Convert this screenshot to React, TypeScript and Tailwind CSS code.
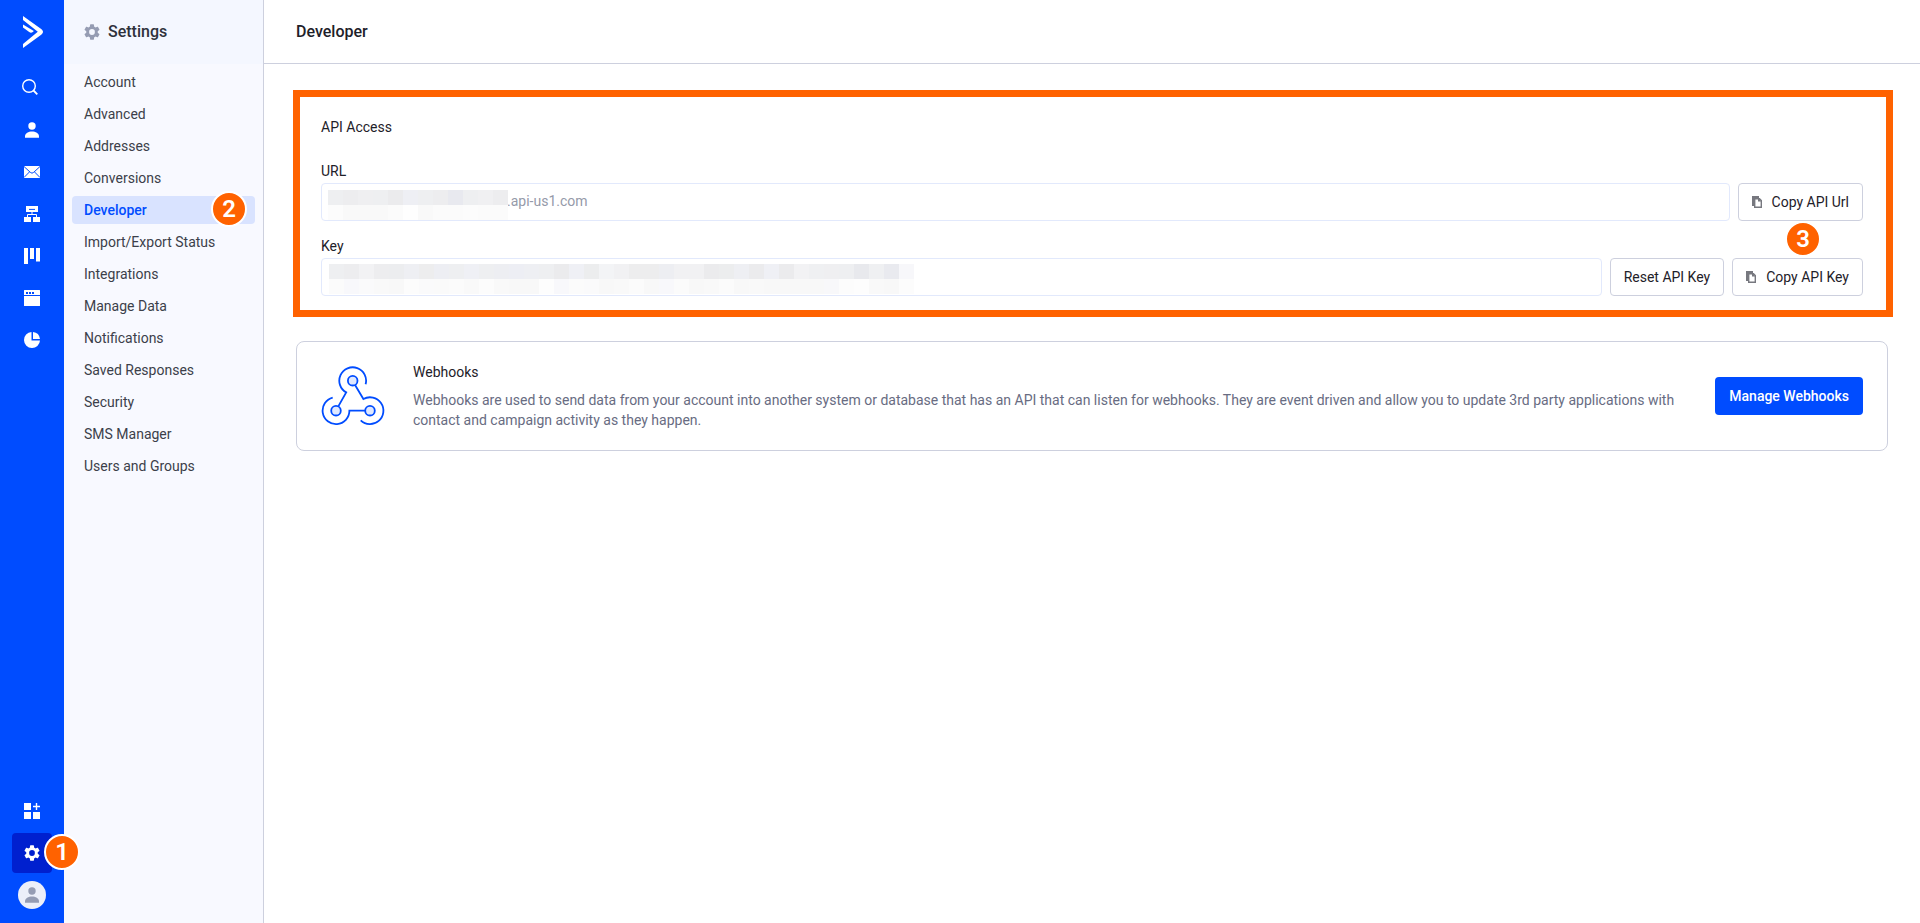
import { ReactNode } from "react";

const menuItems = [
  "Account",
  "Advanced",
  "Addresses",
  "Conversions",
  "Developer",
  "Import/Export Status",
  "Integrations",
  "Manage Data",
  "Notifications",
  "Saved Responses",
  "Security",
  "SMS Manager",
  "Users and Groups",
];

// shades of the tiles that hide the account name and the key
const urlTop = "eeeff1 ededef efeff1 eeeff1 ebebed eeeff4 eeeff1 ededef e8e9ef eeeff1 f0f0f2 ededef".split(" ");
const urlBottom = "fcfcfc f9f9f9 f9f9f9 f9f9f9 fbfbfb fefefe f9f9f9 fbfbfb fbfbfb fcfcfc fbfbfb fbfbfb".split(" ");
const keyTop = "eeeff1 ededef f2f2f4 ededef ecedef eeeff3 ededee edeef3 eeeff1 eff0f5 eeeff1 edeef2 edeef4 eeeff3 eeeff1 ebebed eff0f5 ecedee f3f4f6 f1f1f3 ededee ededee edeef2 f1f1f3 f1f1f3 ebebed ecedee eeeff3 ebebed eff0f5 ebebed f2f2f4 eff0f2 efeff1 eeeff1 e8e9ed eff0f2 e9eaef f7f7fa".split(" ");
const keyBottom = "fbfbfb f8f8fb fafafb f9f9f9 f8f8f8 fcfcfc fafafb fafafa fbfbfb f9f9f9 fcfcfc f9f9f9 f8f8f8 f8f8f8 fdfdfd f8f8fb fbfbfb fafafb f8f8f8 f9f9f9 fbfbfb f8f8f8 f8f8fb fbfbfb f8f8f8 f9f9f9 fbfbfb f8f8f8 f9f9f9 f8f8f8 f8f8f8 f8f8f8 f8f8f8 f8f8fa fcfcfc fdfdfd f9f9f9 f8f8f8 fcfcfc".split(" ");

function Gear(props: { className: string }) {
  return (
    <svg viewBox="2 2 20 20" className={props.className} fill="currentColor">
      <path d="M19.14 12.94c.04-.3.06-.61.06-.94 0-.32-.02-.64-.07-.94l2.03-1.58a.49.49 0 0 0 .12-.61l-1.92-3.32a.49.49 0 0 0-.59-.22l-2.39.96c-.5-.38-1.03-.7-1.62-.94l-.36-2.54a.48.48 0 0 0-.48-.41h-3.84a.47.47 0 0 0-.47.41l-.36 2.54c-.59.24-1.13.57-1.62.94l-2.39-.96a.48.48 0 0 0-.59.22L2.74 8.87a.48.48 0 0 0 .12.61l2.03 1.58c-.05.3-.09.63-.09.94s.02.64.07.94l-2.03 1.58a.49.49 0 0 0-.12.61l1.92 3.32c.12.22.37.29.59.22l2.39-.96c.5.38 1.03.7 1.62.94l.36 2.54c.05.24.24.41.48.41h3.84c.24 0 .44-.17.47-.41l.36-2.54c.59-.24 1.13-.56 1.62-.94l2.39.96c.22.08.47 0 .59-.22l1.92-3.32a.48.48 0 0 0-.12-.61zM12 15.6a3.6 3.6 0 1 1 0-7.2 3.6 3.6 0 0 1 0 7.2" />
    </svg>
  );
}

function PersonIcon() {
  return (
    <svg viewBox="0 0 16 16" className="size-4" fill="currentColor">
      <circle cx="8" cy="4" r="3.7" />
      <path d="M1 15.7v-1.5C1 11 4.5 9.4 8 9.4s7 1.6 7 4.8v1.5z" />
    </svg>
  );
}

function CopyIcon() {
  return (
    <svg viewBox="0 0 10 12" className="h-3 w-[10px] text-[#77787f]" fill="none" stroke="currentColor">
      <path d="M1 10V1h6" strokeWidth="2" />
      <path d="M2.7 2.7h4.8l1.8 1.8v6.8H2.7z" strokeWidth="1.4" />
      <path d="M6 2.7v2.8h3.3L7.5 2.7z" fill="currentColor" stroke="none" />
    </svg>
  );
}

function WebhookIcon() {
  return (
    <svg viewBox="0 0 64 60" className="h-[60px] w-16 shrink-0" fill="none" stroke="#004cff" strokeWidth="1.8">
      <path d="M44.6 18.3A13.4 13.4 0 1 0 25.2 26.4L17.3 40.4" />
      <path d="M34.2 19.2L42.4 33A13.4 13.4 0 1 1 39.7 54.3" />
      <path d="M44 44.7H28.4A13.4 13.4 0 1 1 11.7 31.7" />
      <circle cx="31.7" cy="14.7" r="4.8" fill="#dfe8ff" />
      <circle cx="15" cy="44.7" r="4.8" fill="#dfe8ff" />
      <circle cx="49" cy="44.7" r="4.8" fill="#dfe8ff" />
    </svg>
  );
}

function RailLink(props: { label: string; children: ReactNode }) {
  return (
    <a href="#" aria-label={props.label} className="flex h-[42px] w-full items-center justify-center">
      {props.children}
    </a>
  );
}

function Rail() {
  return (
    <nav className="flex w-16 shrink-0 flex-col items-center bg-[#004cff] text-white">
      <a href="#" aria-label="Home" className="flex h-16 items-center pl-[2px]">
        <svg viewBox="0 0 20 32" className="h-8 w-5" fill="currentColor">
          <path d="M0 0v3.9L14.8 15.8 0 28v4l18.2-13.2c2.4-1.8 2.4-4.2 0-5.9z" />
          <path d="M0 8.6v3l6.2 4.4c1.3.9 2.4.8 3.6-.1l1-.9z" />
        </svg>
      </a>
      <div className="mt-[3px] flex w-full flex-col">
        <RailLink label="Search">
          <svg viewBox="0 0 16 16" className="mr-[5px] mb-[2px] size-4" fill="none" stroke="currentColor" strokeWidth="1.4">
            <circle cx="7" cy="7" r="6.3" />
            <path d="M11.5 11.5l3.8 3.8" strokeWidth="1.8" />
          </svg>
        </RailLink>
        <RailLink label="Contacts">
          <PersonIcon />
        </RailLink>
        <RailLink label="Campaigns">
          <svg viewBox="0 0 16 12" className="h-3 w-4">
            <rect width="16" height="12" rx=".5" fill="currentColor" />
            <path
              d="M0 .5L6.5 6.5a2.3 2.3 0 0 0 3 0L16 .5M0 11.5L5.6 5.8M16 11.5L10.4 5.8"
              fill="none"
              stroke="#004cff"
            />
          </svg>
        </RailLink>
        <RailLink label="Automations">
          <svg viewBox="0 0 16 16" className="size-4" fill="currentColor">
            <path d="M2 0h12v6H2zM0 11h7v5H0zM9 11h7v5H9z" />
            <path d="M8 6v2.5M3.5 11V8.5h9V11" fill="none" stroke="currentColor" />
            <path d="M5 3.4h6" stroke="#004cff" />
          </svg>
        </RailLink>
        <RailLink label="Deals">
          <svg viewBox="0 0 16 16" className="size-4" fill="currentColor">
            <path d="M0 0h4v16H0zM6 0h4v11H6zM12 0h4v13.5h-4z" />
          </svg>
        </RailLink>
        <RailLink label="Website">
          <svg viewBox="0 0 16 16" className="size-4" fill="currentColor">
            <path d="M0 .5Q0 0 .5 0h15q.5 0 .5.5V5H0zM0 6h16v9.5q0 .5-.5.5H.5q-.5 0-.5-.5z" />
            <path d="M2 2h2v2H2zM5 2h2v2H5zM8 2h2v2H8z" fill="#004cff" />
          </svg>
        </RailLink>
        <RailLink label="Reports">
          <svg viewBox="0 0 16 16" className="size-4" fill="currentColor">
            <path d="M7.5 0A8 8 0 1 0 16 8.5H7.5z" />
            <path d="M9 0a8 8 0 0 1 7 7H9z" />
          </svg>
        </RailLink>
      </div>
      <div className="mt-auto flex w-full flex-col pb-[7px]">
        <RailLink label="Apps">
          <svg viewBox="0 0 16 16" className="size-4" fill="currentColor">
            <path d="M0 0h7v7H0zM0 9h7v7H0zM9 9h7v7H9z" />
            <path d="M12.5 0v7M9 3.5h7" stroke="currentColor" strokeWidth="1.4" />
          </svg>
        </RailLink>
        <div className="relative">
          <RailLink label="Settings">
            <span className="flex size-10 items-center justify-center rounded-sm bg-[#0020cf]">
              <Gear className="size-4" />
            </span>
          </RailLink>
          <Badge className="top-[2px] left-11">1</Badge>
        </div>
        <RailLink label="Profile">
          <span className="flex size-7 items-center justify-center rounded-full bg-[#eceff9] text-[#959cb3]">
            <PersonIcon />
          </span>
        </RailLink>
      </div>
    </nav>
  );
}

// numbered step marker
function Badge(props: { className: string; children: ReactNode }) {
  return (
    <span
      className={`absolute z-10 flex size-9 items-center justify-center rounded-full border-2 border-white bg-[#ff6200] text-2xl leading-none font-semibold text-white ${props.className}`}
    >
      {props.children}
    </span>
  );
}

function SettingsMenu() {
  return (
    <aside className="w-[200px] shrink-0 border-r border-[#cdd0de] bg-[#f8f9ff]">
      <div className="flex h-16 items-center gap-2 bg-[#f4f7ff] pl-5 text-base font-medium text-[#2e313b]">
        <Gear className="size-4 text-[#959cb3]" />
        <h2>Settings</h2>
      </div>
      <ul className="flex flex-col gap-1 px-2 pt-1">
        {menuItems.map((item) => (
          <li key={item} className="relative">
            <a
              href="#"
              className={`block h-7 rounded-sm px-3 leading-7 ${item === "Developer" ? "bg-[#d9e3ff] font-medium text-[#004cff]" : "text-[#3c3f4a]"}`}
            >
              {item}
            </a>
            {item === "Developer" && <Badge className="-top-[5px] right-2">2</Badge>}
          </li>
        ))}
      </ul>
    </aside>
  );
}

function Mosaic(props: { top: string[]; bottom: string[]; className: string }) {
  return (
    <div className={`absolute ${props.className}`}>
      {[props.top, props.bottom].map((row, i) => (
        <div key={i} className="flex">
          {row.map((shade, j) => (
            <span key={j} className="size-[15px]" style={{ backgroundColor: "#" + shade }} />
          ))}
        </div>
      ))}
    </div>
  );
}

function Field(props: { id: string; label: string; value: string; mosaic: ReactNode; children: ReactNode }) {
  return (
    <div>
      <label htmlFor={props.id} className="block leading-5">
        {props.label}
      </label>
      <div className="mt-[2px] flex gap-2">
        <div className="relative grow">
          <input
            id={props.id}
            readOnly
            defaultValue={props.value}
            className="h-[38px] w-full rounded-sm border border-[#e2e9fc] bg-white pb-[2px] pl-[185px] text-[#959aa9] outline-none"
          />
          {props.mosaic}
        </div>
        {props.children}
      </div>
    </div>
  );
}

function OutlineButton(props: { children: ReactNode }) {
  return (
    <button className="flex h-[38px] shrink-0 items-center gap-[10px] rounded-sm border border-[#cdd0de] bg-white px-[13px]">
      {props.children}
    </button>
  );
}

function ApiAccess() {
  return (
    <section className="-mr-[5px] -ml-[3px] border-[7px] border-[#ff6200] pt-5 pr-[23px] pb-[14px] pl-[21px]">
      <h3 className="leading-5">API Access</h3>
      <div className="mt-6 flex flex-col gap-[15px]">
        <Field
          id="api-url"
          label="URL"
          value=".api-us1.com"
          mosaic={<Mosaic top={urlTop} bottom={urlBottom} className="top-[7px] left-[7px]" />}
        >
          <div className="relative">
            <OutlineButton>
              <CopyIcon />
              Copy API Url
            </OutlineButton>
            <Badge className="top-[38px] right-[42px]">3</Badge>
          </div>
        </Field>
        <Field
          id="api-key"
          label="Key"
          value=""
          mosaic={<Mosaic top={keyTop} bottom={keyBottom} className="top-[6px] left-2" />}
        >
          <OutlineButton>Reset API Key</OutlineButton>
          <OutlineButton>
            <CopyIcon />
            Copy API Key
          </OutlineButton>
        </Field>
      </div>
    </section>
  );
}

function Webhooks() {
  return (
    <section className="mt-6 flex items-center rounded-lg border border-[#cdd0de] px-6 py-5">
      <WebhookIcon />
      <div className="ml-7 grow">
        <h3 className="leading-5">Webhooks</h3>
        <p className="mt-2 leading-5 text-[#686c82]">
          Webhooks are used to send data from your account into another system or database that has an API that can
          listen for webhooks. They are event driven and allow you to update 3rd party applications with contact and
          campaign activity as they happen.
        </p>
      </div>
      <button className="ml-6 h-[38px] shrink-0 rounded-sm bg-[#004cff] px-[14px] font-medium text-white">
        Manage Webhooks
      </button>
    </section>
  );
}

export default function App() {
  return (
    <div className="flex min-h-screen bg-white font-['Roboto',sans-serif] text-sm text-[#1e2129]">
      <Rail />
      <SettingsMenu />
      <div className="min-w-0 grow">
        <header className="flex h-16 items-center border-b border-[#cdd0de] px-8">
          <h1 className="text-base font-medium">Developer</h1>
        </header>
        <main className="px-8 pt-[26px]">
          <ApiAccess />
          <Webhooks />
        </main>
      </div>
    </div>
  );
}
